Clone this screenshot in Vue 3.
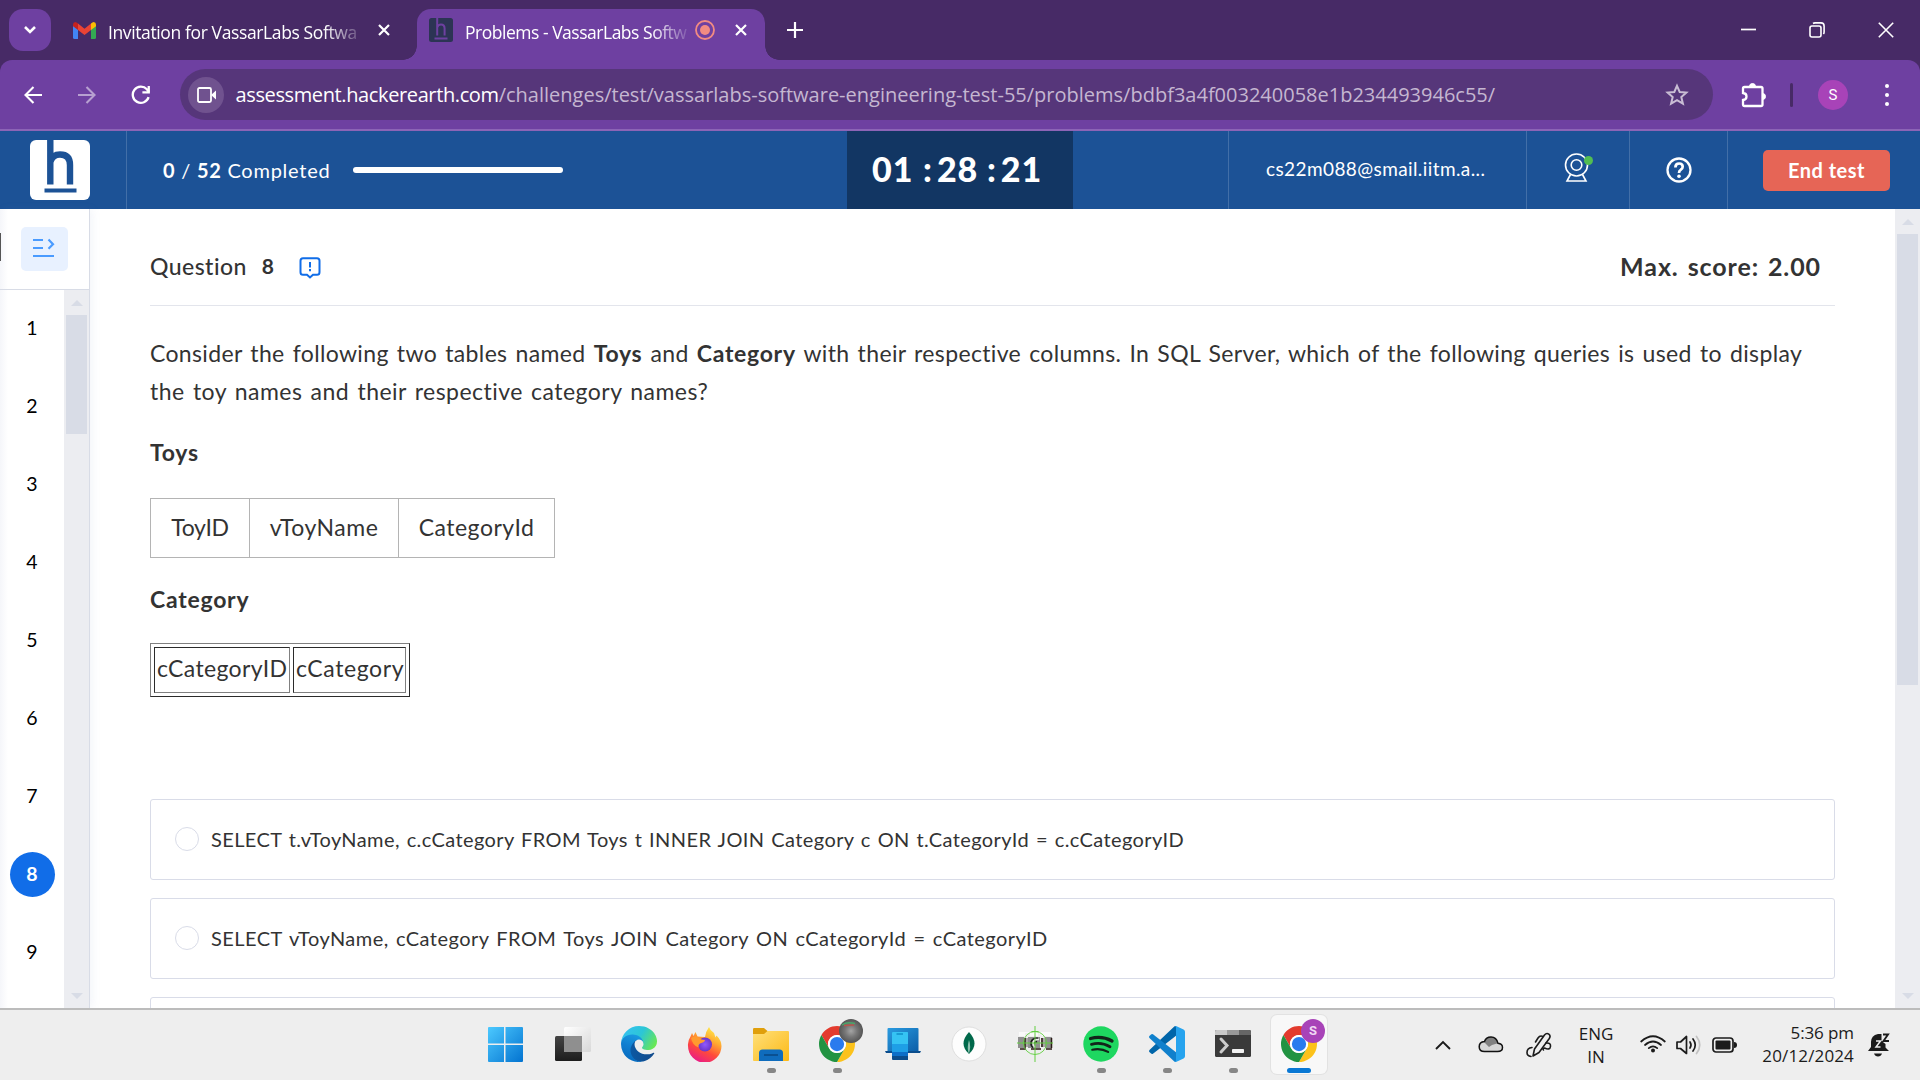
<script setup>
const questions = [1, 2, 3, 4, 5, 6, 7, 8, 9]
const current = 8
const options = [
  { cls: 'o1', text: 'SELECT t.vToyName, c.cCategory FROM Toys t INNER JOIN Category c ON t.CategoryId = c.cCategoryID' },
  { cls: 'o2', text: 'SELECT vToyName, cCategory FROM Toys JOIN Category ON cCategoryId = cCategoryID' },
]
</script>

<template>
  <div class="screen">
    <header class="tabstrip">
      <div class="tabsearch">
        <svg width="14" height="10" viewBox="0 0 14 10"><path d="M2 2l5 5 5-5" fill="none" stroke="#fff" stroke-width="2.6" /></svg>
      </div>
      <div class="tab idle">
        <svg class="gmail" width="23" height="17" viewBox="0 0 23 17">
          <path d="M0 3v12.500q0 1.500 1.500 1.500H5V7z" fill="#4285f4" />
          <path d="M23 3v12.500q0 1.500-1.500 1.500H18V7z" fill="#34a853" />
          <path d="M18 2.500V8l5-3.800V2.500Q23 0 20.600 0 19.500 0 18 1.500z" fill="#fbbc04" />
          <path d="M5 8V1.600L11.500 6.700 18 1.600V8l-6.500 5z" fill="#ea4335" />
          <path d="M0 2.500v1.700L5 8V1.600Q3.500 0 2.400 0 0 0 0 2.500z" fill="#c5221f" />
        </svg>
        <span class="tabtitle t1">Invitation for VassarLabs Softwa</span>
        <svg class="x" width="12" height="12" viewBox="0 0 12 12"><path d="M1 1l10 10M11 1L1 11" stroke="#fff" stroke-width="2.2" /></svg>
      </div>
      <div class="tab active">
        <svg width="24" height="24" viewBox="0 0 24 24"><rect width="24" height="24" rx="2.500" fill="#2c3454" /><path d="M8.200 0v17.500M8.200 9.500Q9 6.500 12 6.500q3.600 0 3.600 4v7M5.500 20.500h13" fill="none" stroke="#6e40a1" stroke-width="2" /></svg>
        <span class="tabtitle t2">Problems - VassarLabs Softw</span>
        <svg class="rec" width="20" height="20" viewBox="0 0 20 20"><circle cx="10" cy="10" r="9" fill="none" stroke="#f28b82" stroke-width="1.800" /><circle cx="10" cy="10" r="5" fill="#f28b82" /></svg>
        <svg class="x" width="12" height="12" viewBox="0 0 12 12"><path d="M1 1l10 10M11 1L1 11" stroke="#fff" stroke-width="2.200" /></svg>
      </div>
      <svg class="plus" width="16" height="16" viewBox="0 0 16 16"><path d="M8 0v16M0 8h16" stroke="#fff" stroke-width="2.200" /></svg>
      <div class="winctl">
        <svg width="15" height="16" viewBox="0 0 15 16"><path d="M0 7.500h15" stroke="#fff" stroke-width="1.700" /></svg>
        <svg width="16" height="16" viewBox="0 0 16 16"><rect x="1" y="4" width="11" height="11" rx="2" fill="none" stroke="#fff" stroke-width="1.600" /><path d="M4 1.500Q4.800.9 6 .9h6q3.100 0 3.100 3.100v6q0 1.200-.7 2" fill="none" stroke="#fff" stroke-width="1.600" /></svg>
        <svg width="16" height="16" viewBox="0 0 16 16"><path d="M.8.800l14.400 14.400M15.200.8L.8 15.200" stroke="#fff" stroke-width="1.600" /></svg>
      </div>
    </header>

    <div class="toolbar-back">
      <div class="toolbar">
        <svg class="nav" width="18" height="18" viewBox="0 0 18 18"><path d="M18 9H2M9.500 1L1.500 9l8 8" fill="none" stroke="#fff" stroke-width="2.100" /></svg>
        <svg class="nav fwd" width="18" height="18" viewBox="0 0 18 18"><path d="M0 9h16M8.500 1l8 8-8 8" fill="none" stroke="#fff" stroke-width="2.100" /></svg>
        <svg class="nav rel" width="20" height="20" viewBox="0 0 20 20"><path d="M17.600 12.200A8.100 8.100 0 1 1 15.900 4.300L18 7" fill="none" stroke="#fff" stroke-width="2.300" /><path d="M18.900 1v7.500h-7.500V6.300h5.200V1z" fill="#fff" /></svg>
        <div class="omnibox">
          <span class="cam">
            <svg width="20" height="16" viewBox="0 0 20 16"><rect x="1" y="1" width="13" height="14" rx="1.500" fill="none" stroke="#fff" stroke-width="1.800" /><path d="M14 8l5-4.500v9z" fill="#fff" /></svg>
          </span>
          <span class="url"><span class="host">assessment.hackerearth.com</span><span class="path">/challenges/test/vassarlabs-software-engineering-test-55/problems/bdbf3a4f003240058e1b234493946c55/</span></span>
          <svg class="star" width="24" height="24" viewBox="0 0 24 24"><path d="M12 2.800l2.700 6.200 6.700.6-5.100 4.400 1.600 6.600-5.900-3.500-5.900 3.500L7.700 14 2.600 9.600l6.700-.6z" fill="none" stroke="#c9bdd4" stroke-width="2" /></svg>
        </div>
        <svg class="ext" width="26" height="26" viewBox="0 0 26 26"><path d="M3.500 5h16.500q1.500 0 1.500 1.500v16q0 1.500-1.500 1.500H3.500Q2 24 2 22.500V18q3.500-.3 3.500-3.500T2 11V6.500Q2 5 3.500 5z" fill="none" stroke="#fff" stroke-width="2.300" /><path d="M8.500 4.500a3 3 0 0 1 6 0zM21.500 11.500a3 3 0 0 1 0 6z" fill="#fff" stroke="#fff" /></svg>
        <i class="tdiv"></i>
        <span class="avatar">S</span>
        <span class="dots"><i></i><i></i><i></i></span>
      </div>
    </div>

    <div class="apphead">
      <div class="logo">
        <svg width="60" height="60" viewBox="0 0 60 60"><rect width="60" height="60" rx="6" fill="#fff" /><path d="M20.300 0v44.500M20.300 22Q22.500 14.500 30 14.500q10 0 10 10.500v19.500" fill="none" stroke="#1c5296" stroke-width="6.400" /><path d="M14.500 50.500h32" stroke="#1c5296" stroke-width="4" /></svg>
      </div>
      <div class="progress">
        <span class="cnt"><b>0</b> / <b>52</b> Completed</span>
        <i class="bar"></i>
      </div>
      <div class="timer"><span class="tm">01</span><span class="c1">:</span><span class="tm">28</span><span class="c2">:</span><span class="tm">21</span></div>
      <div class="email">cs22m088@smail.iitm.a...</div>
      <div class="cell webcam">
        <svg width="30" height="30" viewBox="0 0 30 30"><g fill="none" stroke="#fff" stroke-width="1.600"><circle cx="12.500" cy="12" r="11" /><circle cx="12.500" cy="12" r="5.300" /><path d="M6.500 21.500L3 28h19l-3.500-6.500" /></g><circle cx="24.500" cy="7.500" r="4.500" fill="#52bd52" /></svg>
      </div>
      <div class="cell help">
        <svg width="26" height="26" viewBox="0 0 26 26"><g fill="none" stroke="#fff" stroke-width="2.300"><circle cx="13" cy="13" r="11.500" /><path d="M9.400 10.400q0-3.900 3.700-3.900 3.600 0 3.600 3.200 0 2-2 3.100-1.700 1-1.700 3.200" stroke-width="2.700" /></g><circle cx="13" cy="19.300" r="1.800" fill="#fff" /></svg>
      </div>
      <div class="endwrap"><button class="end">End test</button></div>
    </div>

    <div class="main">
      <aside class="side">
        <div class="toggle-row">
          <i class="edge"></i>
          <div class="toggle">
            <svg width="22" height="20" viewBox="0 0 22 20"><path d="M0 2h10M0 10h10M0 18h21" stroke="#4a9bff" stroke-width="2.200" /><path d="M15.500 1.500l4.500 4.700-4.500 4.600" fill="none" stroke="#4a9bff" stroke-width="2.200" /></svg>
          </div>
        </div>
        <div class="side-body">
          <ol class="nums">
            <li v-for="n in questions" :key="n" :class="{ cur: n === current }"><span>{{ n }}</span></li>
          </ol>
          <div class="scroll sscroll"><i class="up"></i><i class="thumb"></i><i class="down"></i></div>
        </div>
      </aside>
      <section class="content">
        <div class="qhead">
          <span class="q">Question</span><b class="qn">8</b>
          <svg class="flag" width="22" height="22" viewBox="0 0 22 22"><path d="M4 1.200h14q2.500 0 2.500 2.500v11.500q0 2.500-2.500 2.500h-4L11 20.500l-3-2.800H4q-2.500 0-2.500-2.500V3.700q0-2.500 2.500-2.500z" fill="none" stroke="#116de8" stroke-width="2" /><path d="M11 5v5.500M11 12v2.200" stroke="#116de8" stroke-width="2" /></svg>
          <span class="score">Max. score: 2.00</span>
        </div>
        <div class="prose">
          <p class="l1">Consider the following two tables named <b>Toys</b> and <b>Category</b> with their respective columns. In SQL Server, which of the following queries is used to display</p>
          <p class="l2">the toy names and their respective category names?</p>
          <h4 class="h1">Toys</h4>
          <div class="toys">
            <span>ToyID</span><span>vToyName</span><span>CategoryId</span>
          </div>
          <h4 class="h2">Category</h4>
          <div class="cats"><span>cCategoryID</span><span>cCategory</span></div>
        </div>
        <div class="opts">
          <label v-for="o in options" :key="o.cls" class="opt"><i class="radio"></i><span :class="o.cls">{{ o.text }}</span></label>
          <label class="opt"></label>
        </div>
      </section>
      <div class="scroll mscroll"><i class="up"></i><i class="thumb"></i><i class="down"></i></div>
    </div>

    <footer class="taskbar">
      <div class="apps">
        <div class="app">
          <svg class="win" width="36" height="36" viewBox="0 0 36 36"><defs><linearGradient id="w" x1="0" y1="0" x2="1" y2="1"><stop offset="0" stop-color="#4cc9ff" /><stop offset="1" stop-color="#0373d0" /></linearGradient></defs><path fill="url(#w)" d="M2 1h15v16.500H1V2q0-1 1-1zM18.500 1H35q1 0 1 1v15.500H18.500zM1 19h16v17H2q-1 0-1-1zM18.500 19H36v16q0 1-1 1H18.500z" /></svg>
        </div>
        <div class="app">
          <svg width="36" height="36" viewBox="0 0 36 36"><defs><linearGradient id="tv" x1="0" y1="0" x2="0" y2="1"><stop offset="0" stop-color="#444" /><stop offset="1" stop-color="#1c1c1c" /></linearGradient><linearGradient id="tw" x1="0" y1="0" x2="1" y2="1"><stop offset="0" stop-color="#fff" /><stop offset="1" stop-color="#d8d8d8" /></linearGradient></defs><rect y="10" width="27" height="25" rx="1.500" fill="url(#tv)" /><rect x="9" y="1" width="27" height="25" rx="1.500" fill="url(#tw)" /><path d="M9 10h18v16H9z" fill="#8f8f8f" /></svg>
        </div>
        <div class="app">
          <svg width="36" height="36" viewBox="0 0 256 256"><defs><linearGradient id="e1" x1="0" y1="0" x2="1" y2="0"><stop offset="0" stop-color="#0c59a4" /><stop offset="1" stop-color="#114a8b" /></linearGradient><linearGradient id="e2" x1=".6" y1="0" x2=".3" y2="1"><stop offset="0" stop-color="#1b9de2" /><stop offset=".5" stop-color="#0f7dd0" /><stop offset="1" stop-color="#0669bd" /></linearGradient><linearGradient id="e3" x1="0" y1=".3" x2="1" y2=".7"><stop offset="0" stop-color="#35c1f1" /><stop offset=".5" stop-color="#2cc6d6" /><stop offset="1" stop-color="#6be94f" /></linearGradient></defs>
            <path fill="url(#e1)" d="M231.070 190.540c-3.400 1.780-6.920 3.340-10.540 4.670a101.960 101.960 0 0 1-35.900 6.460c-47.330 0-88.550-32.550-88.550-74.320A31.480 31.480 0 0 1 112.500 100.100c-42.800 1.800-53.800 46.400-53.800 72.530 0 73.880 68.090 81.370 82.760 81.370 7.910 0 19.840-2.300 27-4.560l1.310-.44a128.340 128.340 0 0 0 66.600-52.800 4 4 0 0 0-5.300-5.660z" />
            <path fill="url(#e2)" d="M105.730 241.420a79.200 79.200 0 0 1-22.740-21.340 80.720 80.720 0 0 1 29.530-120c3.120-1.470 8.450-4.130 15.540-4a32.350 32.350 0 0 1 25.690 13 31.880 31.880 0 0 1 6.360 18.660c0-.21 24.460-79.600-80-79.600-43.900 0-80 41.660-80 78.210a130.150 130.150 0 0 0 12.110 56 128 128 0 0 0 156.380 67.110 75.550 75.550 0 0 1-62.780-8z" />
            <path fill="url(#e3)" d="M152.330 148.860c-.81 1.050-3.300 2.500-3.300 5.660 0 2.610 1.700 5.120 4.720 7.230 14.380 10 41.490 8.680 41.560 8.680a59.560 59.560 0 0 0 30.270-8.350 61.380 61.380 0 0 0 30.430-52.880c.26-22.410-8-37.310-11.340-43.910C223.460 23.840 177.720 0 128 0A128 128 0 0 0 0 126.200c.48-36.540 36.800-66.050 80-66.050 3.500 0 23.460.34 42 10.070 16.340 8.580 24.900 18.940 30.850 29.210 6.180 10.670 7.280 24.150 7.280 29.520s-2.740 13.330-7.800 19.910z" /></svg>
        </div>
        <div class="app">
          <svg width="36" height="36" viewBox="0 0 36 36"><defs><linearGradient id="f1" x1=".8" y1="0" x2=".3" y2="1"><stop offset="0" stop-color="#fff44f" /><stop offset=".35" stop-color="#ffa930" /><stop offset=".65" stop-color="#ff4b3a" /><stop offset="1" stop-color="#e8198b" /></linearGradient><radialGradient id="f2"><stop offset="0" stop-color="#9059ff" /><stop offset="1" stop-color="#6a35c9" /></radialGradient></defs><path fill="url(#f1)" d="M22 1q1 3.500 5 6l1.500 4.500 1-2q5 5 5 10.500A16.700 16.700 0 0 1 1 20q-.5-5 2.500-9.500L5 7l1.500 3 2-4 2 4.500L18 11q1-6 4-10z" /><circle cx="18" cy="18.500" r="7" fill="url(#f2)" /><path fill="#ff9a2e" d="M4 12q4-3 7.500-.5 2.500 2.500 6.500 2.500 0 2-5 3.500-2 1-1.500 4-6-2-7.500-9.500z" /></svg>
        </div>
        <div class="app run">
          <svg width="36" height="36" viewBox="0 0 36 36"><defs><linearGradient id="g1" x1="0" y1="0" x2="1" y2="1"><stop offset="0" stop-color="#ffe07a" /><stop offset="1" stop-color="#fcb916" /></linearGradient></defs><path d="M1.200 2H11l4 3.500L11 9H0V3.200Q0 2 1.200 2z" fill="#e09f0b" /><path d="M0 8h11l3.500-3H35q1 0 1 1v28q0 1-1 1H1q-1 0-1-1z" fill="url(#g1)" /><path d="M6 35v-8q0-3.500 3.500-3.500h17Q30 23.500 30 27v8z" fill="#0f6cbd" /><path d="M11 29h14" stroke="#0a4a86" stroke-width="1.600" /></svg>
        </div>
        <div class="app run">
          <svg width="36" height="36" viewBox="0 0 48 48"><path fill="#e33b2e" d="M24 12h20.780A24 24 0 0 0 3.220 12L13.600 30A12 12 0 0 1 24 12z" /><path fill="#fcc21b" d="M34.400 30L24 48A24 24 0 0 0 44.780 12H24a12 12 0 0 1 10.400 18z" /><path fill="#229342" d="M13.600 30L3.220 12A24 24 0 0 0 24 48l10.400-18a12 12 0 0 1-20.800 0z" /><circle cx="24" cy="24" r="12" fill="#fff" /><circle cx="24" cy="24" r="9.500" fill="#2a7bee" /></svg>
          <svg class="badge" width="24" height="24" viewBox="0 0 24 24"><defs><radialGradient id="b1"><stop offset="0" stop-color="#a5a5a5" /><stop offset=".5" stop-color="#777" /><stop offset="1" stop-color="#555" /></radialGradient></defs><circle cx="12" cy="12" r="12" fill="url(#b1)" /><path d="M3 6q5-3.500 13-1.500" stroke="#4aa66a" fill="none" stroke-width="1.500" /><path d="M5 6.500l10-.5" stroke="#b9554c" stroke-width="1.500" /></svg>
        </div>
        <div class="app">
          <svg width="36" height="36" viewBox="0 0 36 36"><defs><linearGradient id="p1" x1="0" y1="0" x2="1" y2="1"><stop offset="0" stop-color="#2a9be0" /><stop offset="1" stop-color="#0c5ea8" /></linearGradient></defs><path d="M3.500 2h29q1 0 1 1v22h-31V3q0-1 1-1z" fill="url(#p1)" /><path d="M0 25h36l-1 2H1z" fill="#0b4d8c" /><path d="M8 6h14.500q.5 0 .5.500V33H8q-1 0-1-1V7q0-1 1-1z" fill="#35c3f3" /><path d="M7 18h16v8H7z" fill="#1e9fe6" /><path d="M7 26h16v5H7z" fill="#0d6fc8" /><path d="M7 30h16v4H8q-1 0-1-1z" fill="#0b4d8c" /><path d="M11.500 8h6.500" stroke="#0f8fc8" stroke-width="1.500" /></svg>
        </div>
        <div class="app">
          <svg width="36" height="36" viewBox="0 0 36 36"><circle cx="18" cy="18" r="17" fill="#fdfdfd" stroke="#d8d8d8" stroke-width=".8" /><path d="M18 6q5.500 6 5.500 11.500T18 28q-5.500-5-5.500-10.500T18 6z" fill="#00684a" /><path d="M18 14q2.300 6-.1 14-2.300-6 .1-14z" fill="#8dbfae" /></svg>
        </div>
        <div class="app">
          <svg width="36" height="36" viewBox="0 0 36 36"><path d="M2 6v4h6V7h5v3h8V6l4 4h9V6" fill="#fff" opacity=".7" /><path d="M1 11h6v11H1zM11 11h12v11H11zM28 11h7v11h-7z" fill="#8f8f8f" /><path d="M7 12h4v9H7zM24 12h4v9h-4z" fill="#a9a6a6" /><path d="M3 23h6M14 23h10M29 23h6M8 12v10M34.500 12v10M25 12v9" stroke="#2b1a15" stroke-width="1.500" /><path d="M21 12.500h-3q-4 1-4 5 0 3 2 4M17 17l3-1.500" stroke="#1d1d1d" fill="none" stroke-width="1.800" /><path d="M22 13.500h-3q-3 1-3 4 0 2.500 2 3.500" stroke="#eee" fill="none" stroke-width="1.400" /><g stroke="#62cf41" fill="none"><circle cx="18" cy="17" r="11.500" stroke-width=".9" /><path d="M18 0v36M0 17h36M14.500 5.500h7" /></g></svg>
        </div>
        <div class="app run">
          <svg width="36" height="36" viewBox="0 0 36 36"><circle cx="18" cy="18" r="17.700" fill="#1ed760" /><g fill="none" stroke="#12251a" stroke-linecap="round"><path d="M7.500 12.500q11.500-3 21.500 2.500" stroke-width="3.300" /><path d="M8.500 18.300q10-2.700 18.500 2.500" stroke-width="2.800" /><path d="M9.300 23.700q8.500-2 15.800 2.200" stroke-width="2.200" /></g></svg>
        </div>
        <div class="app run">
          <svg width="36" height="36" viewBox="0 0 100 100"><path d="M71 1l4-1v27L11 77q-3 2-6-1l-4-4q-2-3 1-6z" fill="#0065a9" /><path d="M71 99l4 1V73L11 23q-3-2-6 1l-4 4q-2 3 1 6z" fill="#1080cc" /><path d="M75 0l21 10q4 2 4 6v68q0 4-4 6l-21 10-4-1q4 0 4-4V5q0-4-4-4z" fill="#26a3ee" /></svg>
        </div>
        <div class="app run">
          <svg width="36" height="36" viewBox="0 0 36 36"><path d="M1.500 4h33Q36 4 36 5.500v24q0 1.500-1.500 1.500h-33Q0 31 0 29.500v-24Q0 4 1.500 4z" fill="#3a3a3a" /><path d="M1.500 4H12v5H0V5.500Q0 4 1.500 4z" fill="#c8c8c8" /><path d="M12 4h12v5H12z" fill="#999" /><path d="M24 4h10.500Q36 4 36 5.500V9H24z" fill="#666" /><path d="M6 13l6 6.500L6 26" fill="none" stroke="#ccc" stroke-width="3" stroke-linecap="round" /><rect x="17" y="23" width="12" height="4" rx=".8" fill="#f2f2f2" /></svg>
        </div>
        <div class="app run on">
          <svg width="36" height="36" viewBox="0 0 48 48"><path fill="#e33b2e" d="M24 12h20.780A24 24 0 0 0 3.220 12L13.600 30A12 12 0 0 1 24 12z" /><path fill="#fcc21b" d="M34.400 30L24 48A24 24 0 0 0 44.780 12H24a12 12 0 0 1 10.400 18z" /><path fill="#229342" d="M13.600 30L3.220 12A24 24 0 0 0 24 48l10.400-18a12 12 0 0 1-20.800 0z" /><circle cx="24" cy="24" r="12" fill="#fff" /><circle cx="24" cy="24" r="9.500" fill="#2a7bee" /></svg>
          <span class="badge sb">S</span>
        </div>
      </div>
      <div class="tray">
        <svg class="chev" width="16" height="10" viewBox="0 0 16 10"><path d="M1 9l7-7 7 7" fill="none" stroke="#1b1b1b" stroke-width="1.900" /></svg>
        <svg class="cloud" width="26" height="18" viewBox="0 0 26 18"><path d="M6.500 16.500h13q5 0 5-4 0-3.700-4.500-4.200Q18.500 2 13 2 8 2 6.500 6.500 1.200 7 1.200 11.700q0 4.800 5.300 4.800z" fill="#d6d6d6" /><path d="M6 7Q7.500 2 13 2t7 6.300l-6 1.700-3 2z" fill="#808080" /><path d="M6.500 16.500h13q5 0 5-4 0-3.700-4.500-4.200Q18.500 2 13 2 8 2 6.500 6.500 1.200 7 1.200 11.700q0 4.800 5.300 4.800z" fill="none" stroke="#111" stroke-width="1.500" /></svg>
        <svg class="pen" width="26" height="26" viewBox="0 0 26 26"><g fill="none" stroke="#1b1b1b" stroke-width="1.600" stroke-linejoin="round" stroke-linecap="round"><path d="M7 24l1.500-7L18.500 3q2-2.500 4.300-.9 2.200 1.600.5 4.400L13 20.500z" /><path d="M17 4.500q-3-1.500-5 1.500l-2.500 4M6 15.500q-5 .5-5 5 0 3.500 4 4M20 11q5-.5 4.500 3.500t-6 1.500q-2.500.5-1 2" /></g></svg>
        <div class="lang"><span>ENG</span><span>IN</span></div>
        <svg class="wifi" width="26" height="18" viewBox="0 0 26 18"><g fill="none" stroke="#1b1b1b" stroke-width="1.700" stroke-linecap="round"><path d="M1.200 6.500q11.800-10.500 23.600 0M5 10q8-7 16 0M8.800 13.200q4.200-3.600 8.400 0" /></g><circle cx="13" cy="15.500" r="2" fill="#1b1b1b" /></svg>
        <svg class="vol" width="26" height="20" viewBox="0 0 26 20"><g fill="none" stroke="#1b1b1b" stroke-width="1.700" stroke-linejoin="round" stroke-linecap="round"><path d="M1 7h3.500L10.500 1.500v17L4.500 13.500H1zM14 7q2 3 0 6M17 4q4.500 6 0 12" /><path d="M20.500 1.500q6.500 8.500 0 17" stroke="#c2c2c2" /></g></svg>
        <svg class="bat" width="25" height="16" viewBox="0 0 25 16"><rect x="1" y="1" width="20" height="14" rx="3" fill="none" stroke="#1b1b1b" stroke-width="1.700" /><rect x="3.500" y="3.500" width="15" height="9" rx="1" fill="#1b1b1b" /><path d="M22 5q3 0 3 3t-3 3z" fill="#1b1b1b" /></svg>
        <div class="clock"><span>5:36 pm</span><span class="date">20/12/2024</span></div>
        <svg class="bell" width="22" height="24" viewBox="0 0 22 24"><path d="M0 18l3-4V9q0-6.500 7-8h3.500v7l4 3v3.500L21 18zM6 20.500h8q-1 3-4 3t-4-3z" fill="#1b1b1b" /><path d="M8 8h4.500L8 14h4.500" fill="none" stroke="#eee" stroke-width="1.500" /><path d="M15 1.500h5L15.500 8H21" fill="none" stroke="#1b1b1b" stroke-width="1.900" /></svg>
      </div>
    </footer>
  </div>
</template>

<style>
body { margin: 0; overflow: hidden; }
</style>

<style scoped>
* { box-sizing: border-box; }
svg { display: block; flex: none; }
i { flex: none; }
.screen { width: 1920px; height: 1080px; display: flex; flex-direction: column; font-family: Lato, "Liberation Sans", sans-serif; color: #333; background: #fff; overflow: hidden; white-space: nowrap; }

.tabstrip { height: 60px; flex: none; background: #472a66; display: flex; font: 18px "Open Sans", sans-serif; color: #fff; }
.tabsearch { width: 42px; height: 42px; margin: 9px 0 0 9px; border-radius: 14px; background: #6e40a1; display: flex; align-items: center; justify-content: center; }
.tab { height: 51px; margin-top: 9px; display: flex; align-items: center; padding-bottom: 9px; }
.idle { width: 366px; padding-left: 22px; }
.gmail { margin-right: 12px; }
.tabtitle { flex: none; line-height: 30px; font-size: 17.5px; letter-spacing: -0.38px; padding-top: 3px; -webkit-mask-image: linear-gradient(to right, #000 calc(100% - 36px), rgba(0, 0, 0, .15)); mask-image: linear-gradient(to right, #000 calc(100% - 36px), rgba(0, 0, 0, .15)); }
.t1 { width: 252px; margin-right: 18px; }
.active { position: relative; width: 348px; background: #6e40a1; border-radius: 14px 14px 0 0; padding-left: 12px; }
.active::before, .active::after { content: ""; position: absolute; bottom: 0; width: 14px; height: 14px; }
.active::before { left: -14px; background: radial-gradient(circle at 0 0, transparent 13.5px, #6e40a1 14px); }
.active::after { right: -14px; background: radial-gradient(circle at 100% 0, transparent 13.5px, #6e40a1 14px); }
.t2 { width: 222px; margin-left: 12px; margin-right: 8px; letter-spacing: -.48px; }
.rec { margin-right: 20px; }
.plus { margin: 22px 0 0 22px; }
.winctl { margin: 22px 26px 0 auto; display: flex; gap: 53px; }

.toolbar-back { background: #472a66; flex: none; }
.toolbar { height: 71px; border-bottom: 2px solid #8c64b6; background: #6e40a1; border-radius: 12px 12px 0 0; display: flex; align-items: center; padding-left: 24px; }
.fwd { margin-left: 36px; opacity: .5; }
.rel { margin-left: 35px; }
.omnibox { width: 1533px; height: 51px; margin-left: 29px; border-radius: 26px; background: #56367a; display: flex; align-items: center; padding-left: 8px; }
.cam { width: 36px; height: 36px; border-radius: 50%; background: #70528f; display: flex; align-items: center; justify-content: center; padding-left: 1px; }
.url { margin-left: 11.500px; font: 20px "Open Sans", sans-serif; flex: 1; color: #c5b7d1; }
.host { color: #fff; letter-spacing: -.38px; }
.star { margin-right: 24px; }
.ext { margin-left: 28px; }
.tdiv { width: 3px; height: 24px; background: #472a66; margin-left: 23px; border-radius: 2px; }
.avatar { width: 30px; height: 30px; margin-left: 25px; border-radius: 50%; background: #a843b8; color: #fff; font: 15px/30px Roboto, sans-serif; text-align: center; }
.dots { display: flex; flex-direction: column; gap: 5px; margin-left: 37px; }
.dots i { width: 4px; height: 4px; border-radius: 50%; background: #fff; }

.apphead { height: 78px; flex: none; background: #1c5296; display: flex; color: #fff; }
.logo { width: 127px; border-right: 1px solid #426fa8; padding: 9px 0 0 30px; }
.progress { width: 720px; padding-left: 36px; display: flex; align-items: center; font-size: 20px; letter-spacing: .75px; }
.cnt { width: 190px; padding-bottom: 1px; }
.bar { width: 210px; height: 6px; border-radius: 3px; background: #fff; }
.timer { width: 226px; background: #123663; display: flex; align-items: center; padding: 0 0 4px 25px; font-size: 34px; font-weight: 900; }
.tm { width: 42px; letter-spacing: 1px; }
.c1 { margin: 0 5px 0 9px; }
.c2 { margin: 0 5px 0 8px; }
.email { margin-left: 155px; width: 299px; border: solid #426fa8; border-width: 0 1px; padding: 0 0 4px 37px; display: flex; align-items: center; font-size: 19px; letter-spacing: .4px; }
.cell { display: flex; align-items: center; border-right: 1px solid #426fa8; }
.webcam { width: 103px; padding: 0 0 4px 37px; }
.help { width: 98px; padding-left: 36px; }
.endwrap { flex: 1; display: flex; align-items: center; padding-left: 35px; }
.end { width: 127px; height: 41px; border: 0; border-radius: 5px; background: #e66556; color: #fff; font: bold 20px Lato, sans-serif; letter-spacing: .5px; padding: 0 0 1px; }

.main { flex: 1; display: flex; min-height: 0; }
.side { width: 90px; border-right: 1px solid #d8dce6; box-shadow: 3px 0 8px rgba(110, 140, 190, .08); display: flex; flex-direction: column; background: linear-gradient(to right, #f5f6fa, #fff 8px); }
.toggle-row { height: 81px; border-bottom: 1px solid #d8dce6; display: flex; flex: none; align-items: flex-start; }
.edge { width: 1px; height: 28px; margin-top: 24px; background: #555; }
.toggle { width: 47px; height: 44px; margin: 18px 0 0 20px; border-radius: 5px; background: #e8f1ff; display: flex; align-items: center; justify-content: center; padding: 0 2px 2px 0; }
.side-body { flex: 1; display: flex; min-height: 0; }
.nums { list-style: none; margin: -1px 0 0; padding: 0; width: 64px; font-size: 19.500px; color: #000; }
.nums li { height: 78px; display: flex; justify-content: center; align-items: center; }
.nums span { width: 45px; height: 45px; line-height: 43px; border-radius: 50%; text-align: center; }
.cur span { background: #116de8; color: #fff; font-weight: bold; }
.scroll { width: 25px; background: #ecedf1; display: flex; flex-direction: column; align-items: center; padding: 10px 0 9px; flex: none; }
.up, .down { border: 6px solid transparent; height: 6px; }
.up { border-top: 0; border-bottom-color: #d8dce6; }
.down { border-bottom: 0; border-top-color: #d8dce6; margin-top: auto; }
.thumb { width: 21px; background: #d8dce6; margin-top: 9px; }
.sscroll .thumb { height: 119px; }
.mscroll .thumb { height: 451px; }

.content { flex: 1; padding: 0 60px; overflow: hidden; }
.qhead { height: 97px; border-bottom: 1px solid #e3e5ec; display: flex; align-items: center; padding-top: 18px; font-size: 23px; font-weight: 500; }
.q { letter-spacing: .45px; padding-bottom: 1px; }
.qn { margin: 0 25px 1px 15px; font-size: 21px; }
.flag { margin-top: 4px; }
.score { margin-left: auto; margin-right: 14px; font-size: 25px; font-weight: bold; letter-spacing: .9px; word-spacing: 2px; }
.prose { font-size: 23px; height: 493px; padding-top: 28px; }
p, h4 { margin: 0; line-height: 38px; }
.l1 { letter-spacing: .35px; word-spacing: 1.900px; }
.l1 b { letter-spacing: .7px; }
.l2 { letter-spacing: .47px; word-spacing: 1.900px; }
.h1, .h2 { font-size: 23px; letter-spacing: .75px; }
.h1 { margin-top: 23px; }
.toys { display: flex; width: 405px; height: 60px; margin-top: 27px; border: 1px solid #b4b4b4; }
.toys span { line-height: 56px; text-align: center; flex: none; letter-spacing: .5px; }
.toys span:nth-child(1) { width: 98px; letter-spacing: -.3px; }
.toys span:nth-child(2) { width: 149px; }
.toys span:nth-child(3) { width: 156px; }
.toys span + span { border-left: 1px solid #b4b4b4; }
.h2 { margin-top: 22px; }
.cats { display: flex; width: 260px; height: 54px; margin-top: 25px; border: 1px solid; border-color: #808080 #2b2b2b #2b2b2b #808080; padding: 3px; gap: 3px; letter-spacing: .35px; }
.cats span { border: 1px solid; border-color: #2b2b2b #808080 #808080 #2b2b2b; padding-left: 2px; line-height: 41px; }
.cats span:first-child { width: 136px; }
.cats span:last-child { width: 113px; letter-spacing: .6px; }
.opts { display: flex; flex-direction: column; gap: 18px; }
.opt { height: 81px; flex: none; border: 1px solid #d9dce8; border-radius: 3px; display: flex; align-items: center; padding: 0 0 1px 24px; font-size: 20px; }
.o1 { letter-spacing: .4px; word-spacing: 1.300px; }
.o2 { letter-spacing: .45px; word-spacing: 1.800px; }
.radio { width: 24px; height: 24px; border: 1px solid #d9dce8; border-radius: 50%; margin-right: 12px; }

.taskbar { height: 72px; flex: none; border-top: 2px solid #bcbcbc; background: #eee; display: flex; position: relative; }
.apps { display: flex; gap: 10px; margin-left: 479px; padding-top: 5px; }
.app { width: 56px; height: 59px; padding: 11px 10px 0; border-radius: 6px; position: relative; }
.win { margin-left: -2px; }
.run::after { content: ""; position: absolute; left: 24px; bottom: 1px; width: 9px; height: 5px; border-radius: 3px; background: #868686; }
.on { background: #f8f8f8; box-shadow: 0 0 0 1px #e2e2e2; }
.on::after { left: 16px; width: 24px; background: #0a78d4; }
.badge { position: absolute; left: 30px; top: 4px; }
.sb { width: 24px; height: 24px; border-radius: 50%; background: #a843b8; color: #f0d8f4; font: bold 13px/24px Roboto, sans-serif; text-align: center; }
.tray { margin-left: auto; display: flex; align-items: center; font: 18px/23px "Open Sans", sans-serif; color: #1b1b1b; padding-right: 30px; }
.lang, .clock { display: flex; flex-direction: column; align-items: center; }
.clock { align-items: flex-end; font-size: 17px; letter-spacing: -.1px; margin-left: 24px; width: 93px; padding-bottom: 3px; }
.date { letter-spacing: .15px; }
.lang { width: 40px; margin-left: 24px; font-size: 17px; padding-bottom: 1px; }
.cloud { margin-left: 27px; margin-bottom: 2px; }
.pen { margin-left: 22px; }
.wifi { margin-left: 24px; margin-bottom: 2px; }
.vol { margin-left: 10px; }
.bat { margin-left: 10px; }
.bell { margin-left: 14px; }
</style>
